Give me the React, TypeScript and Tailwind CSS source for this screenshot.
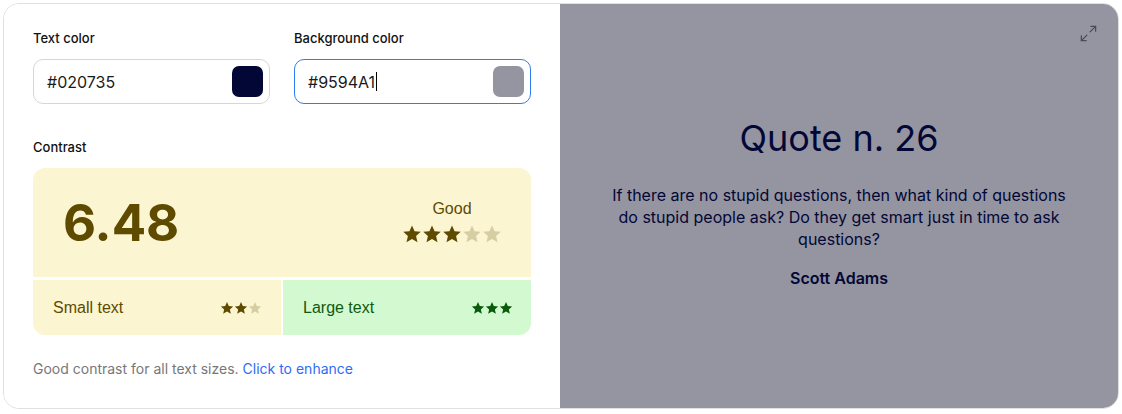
import { Maximize2 } from "lucide-react";

function Star({ size, color }: { size: number; color: string }) {
  return (
    <svg width={size} height={size} viewBox="0 0 24 24" fill={color}>
      <path d="M12 1.8l3.1 6.9 7.4.7-5.6 5 1.7 7.4L12 17.9l-6.6 3.9 1.7-7.4-5.6-5 7.4-.7z" />
    </svg>
  );
}

function Stars({ total, filled, size, on, off }: { total: number; filled: number; size: number; on: string; off: string }) {
  return (
    <div className="flex items-center">
      {Array.from({ length: total }).map((_, i) => (
        <Star key={i} size={size} color={i < filled ? on : off} />
      ))}
    </div>
  );
}

function ColorInput({ label, value, swatch, focused }: { label: string; value: string; swatch: string; focused?: boolean }) {
  return (
    <div className="flex flex-col gap-[13px]">
      <span className="text-[13px] leading-4 font-medium text-[#111]">{label}</span>
      <div
        className={`flex h-[45px] items-center justify-between rounded-[10px] bg-white pr-[6px] pl-[13px] ${
          focused ? "border-[1.5px] border-[#2f7cf6]" : "border border-[#d6d6d6]"
        }`}
      >
        <span className="flex items-center text-base text-[#1a1a1a]">
          {value}
          {focused && <span className="ml-px inline-block h-[19px] w-px bg-black" />}
        </span>
        <div className="h-[31px] w-[31px] rounded-[7px]" style={{ backgroundColor: swatch }} />
      </div>
    </div>
  );
}

export default function App() {
  return (
    <div className="p-[3px] font-['Inter',sans-serif]">
      <div className="flex h-[406px] w-[1116px] overflow-hidden rounded-2xl border border-[#e0e0e0]">
        {/* 설정 패널 */}
        <div className="flex w-[556px] shrink-0 flex-col bg-white pt-[26px] pr-[28px] pl-[29px]">
          <div className="grid grid-cols-[237px_237px] gap-[24px]">
            <ColorInput label="Text color" value="#020735" swatch="#020735" />
            <ColorInput label="Background color" value="#9594A1" swatch="#9594A1" focused />
          </div>

          <span className="mt-[35px] text-[13px] leading-4 font-medium text-[#111]">Contrast</span>

          <div className="mt-[13px] flex w-[498px] flex-col gap-[3px] overflow-hidden rounded-xl font-['Liberation_Sans',Arial,sans-serif]">
            <div className="flex h-[109px] items-center justify-between bg-[#fbf5d2] pr-[29px] pl-[30px] text-[#5e4b00]">
              <span className="font-['Inter',sans-serif] text-[51px] leading-none font-bold">6.48</span>
              <div className="flex flex-col items-center gap-[3px] pb-[4px]">
                <span className="text-base">Good</span>
                <Stars total={5} filled={3} size={20} on="#5e4b00" off="#d6cea3" />
              </div>
            </div>
            <div className="grid h-[55px] grid-cols-2 gap-[2px]">
              <div className="flex items-center justify-between bg-[#fbf5d2] pr-[19px] pl-[20px] text-[#5e4b00]">
                <span className="text-base">Small text</span>
                <Stars total={3} filled={2} size={14} on="#5e4b00" off="#d6cea3" />
              </div>
              <div className="flex items-center justify-between bg-[#d3f9d1] pr-[18px] pl-[20px] text-[#0f5a10]">
                <span className="text-base">Large text</span>
                <Stars total={3} filled={3} size={14} on="#0b5a0b" off="#0b5a0b" />
              </div>
            </div>
          </div>

          <p className="mt-[24px] text-sm text-[#777]">
            Good contrast for all text sizes. <span className="text-[#2f6bf5]">Click to enhance</span>
          </p>
        </div>

        {/* 미리보기 패널 */}
        <div className="relative flex flex-1 flex-col items-center justify-center bg-[#9594a1] px-12 pb-1 text-center text-[#020735]">
          <Maximize2 className="absolute top-[20px] right-[20px] text-[#4b4b57]" size={19} strokeWidth={1.6} />
          <h1 className="text-[36px] leading-10">Quote n. 26</h1>
          <p className="mt-[26px] max-w-[470px] text-base leading-[22px]">
            If there are no stupid questions, then what kind of questions do stupid people ask? Do they get smart just in
            time to ask questions?
          </p>
          <p className="mt-[16px] text-base font-semibold">Scott Adams</p>
        </div>
      </div>
    </div>
  );
}
